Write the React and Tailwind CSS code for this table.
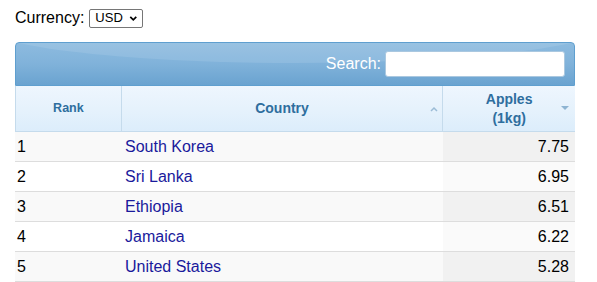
import React from "react";

const rows = [
  { rank: 1, country: "South Korea", price: "7.75" },
  { rank: 2, country: "Sri Lanka", price: "6.95" },
  { rank: 3, country: "Ethiopia", price: "6.51" },
  { rank: 4, country: "Jamaica", price: "6.22" },
  { rank: 5, country: "United States", price: "5.28" },
];

export default function App() {
  return (
    <div className="w-[597px] h-[282px] bg-white font-['Liberation_Sans',Arial,sans-serif] text-black overflow-hidden">
      <div className="pl-[15px] pt-[9px] flex items-center text-[16px] h-[27px]">
        <span>Currency:</span>
        <div className="ml-[5px] h-[19px] w-[54px] border border-[#767676] rounded-[2px] flex items-center px-[5px] text-[13px] gap-[6px]">
          <span>USD</span>
          <svg width="10" height="7" viewBox="0 0 10 7">
            <path d="M1.5 1.5 L5 5 L8.5 1.5" fill="none" stroke="#000" strokeWidth="2" />
          </svg>
        </div>
      </div>

      <div className="ml-[15px] mt-[15px] w-[560px]">
        {/* toolbar */}
        <div className="relative h-[44px] rounded-t-[4px] border border-[#5f9fcf] bg-gradient-to-b from-[#8dbbdf] via-[#80b2da] to-[#6aa3d0] flex items-center justify-end pr-[9px] overflow-hidden">
          <div className="absolute left-[-40px] right-[-40px] top-[-60px] h-[80px] rounded-[50%] bg-white/10" />
          <span className="relative text-white text-[16px] mr-[4px]">Search:</span>
          <div className="relative w-[180px] h-[26px] bg-white rounded-[3px] border border-[#aac8e0]" />
        </div>

        {/* header */}
        <div className="flex h-[46px] bg-gradient-to-b from-[#eef6fe] via-[#e6f2fc] to-[#dcedfb] border-b border-l border-[#c5dbec] text-[#2e6e9e] font-bold">
          <div className="w-[106px] border-r border-[#c5dbec] flex items-center justify-center text-[12.5px]">Rank</div>
          <div className="relative w-[322px] border-r border-[#c5dbec] flex items-center justify-center text-[14px]">
            Country
            <svg className="absolute right-[4px] top-[20px]" width="8" height="6" viewBox="0 0 8 6">
              <path d="M1 5 L4 2 L7 5" fill="none" stroke="#9bbcd6" strokeWidth="1.5" />
            </svg>
          </div>
          <div className="relative w-[132px] flex flex-col items-center justify-center text-[14px] leading-[19px]">
            <span>Apples</span>
            <span>(1kg)</span>
            <svg className="absolute right-[6px] top-[20px]" width="8" height="5" viewBox="0 0 8 5">
              <path d="M0 0 L8 0 L4 4 Z" fill="#8eb4d2" />
            </svg>
          </div>
        </div>

        {/* body */}
        {rows.map((r, i) => {
          const odd = i % 2 === 0;
          return (
            <div
              key={r.rank}
              className={`flex h-[30px] text-[16px] border-b border-[#dddddd] ${odd ? "bg-[#f9f9f9]" : "bg-white"}`}
            >
              <div className="w-[106px] pl-[2px] flex items-center">{r.rank}</div>
              <div className="w-[322px] pl-[4px] flex items-center text-[#1a1a9c]">{r.country}</div>
              <div className={`w-[132px] pr-[6px] flex items-center justify-end ${odd ? "bg-[#f1f1f1]" : "bg-[#fafafa]"}`}>
                {r.price}
              </div>
            </div>
          );
        })}
      </div>
    </div>
  );
}
